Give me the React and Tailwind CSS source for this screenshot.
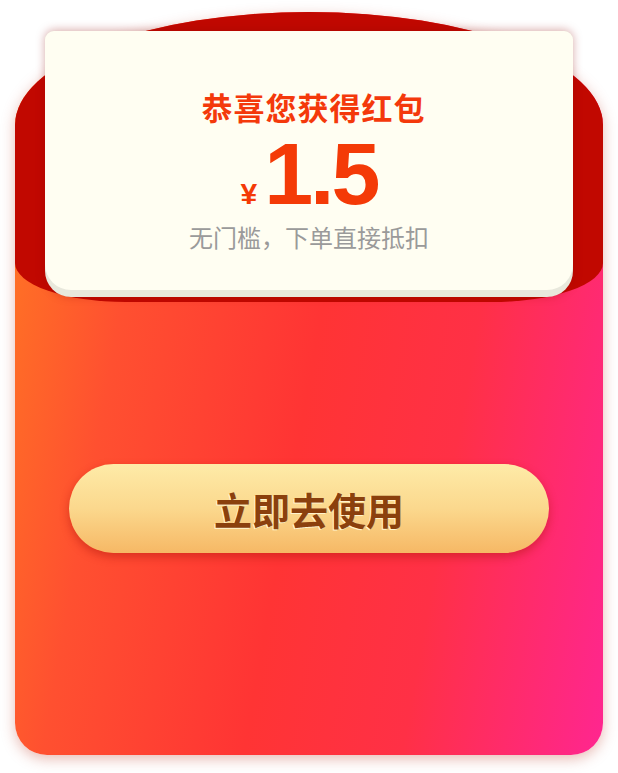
import React from 'react';

const cjk = { fontFamily: '"Noto Sans CJK SC", "Noto Sans", sans-serif' };

const RedPacket = () => {
  return (
    <div className="relative w-[588px] h-[743px] rounded-[294px_294px_32px_32px/113px_113px_32px_32px] bg-[linear-gradient(100deg,#ff7b22_0%,#ff5030_22%,#ff3434_50%,#ff3046_72%,#ff2690_100%)] shadow-[0_4px_14px_rgba(190,60,40,0.35)]">
      {/* top flap */}
      <div className="absolute left-0 top-0 w-full h-[290px] rounded-[294px_294px_111px_111px/113px_113px_39px_39px] bg-[#c10800]" />

      <div className="relative flex flex-col items-center">
        {/* coupon card */}
        <div className="mt-[19px] w-[528px] h-[266px] rounded-t-[9px] rounded-b-[26px] bg-[#e8e8dc] shadow-[0_-1px_10px_rgba(140,10,0,0.35)]">
          <div className="h-[259px] rounded-t-[9px] rounded-b-[26px] bg-[#fffef2] flex flex-col items-center pt-[60px]" style={cjk}>
            <div className="h-[32px] pl-[9px] text-[31px] leading-[32px] font-bold text-[#f4390b] tracking-[1px]">恭喜您获得红包</div>
            <div className="mt-[6px] h-[90px] flex items-baseline text-[#f43a07] font-bold" style={{ fontFamily: '"Liberation Sans", Arial, sans-serif' }}>
              <span className="text-[30px] leading-[90px] mr-[7px]">¥</span>
              <span className="text-[88px] leading-[90px] tracking-[-3px]">1.5</span>
            </div>
            <div className="mt-[6px] h-[24px] text-[24px] leading-[24px] text-[#9a9a9a]">无门槛，下单直接抵扣</div>
          </div>
        </div>

        {/* action button */}
        <button
          className="mt-[167px] w-[480px] h-[89px] rounded-full bg-[linear-gradient(180deg,#feeba8_0%,#fbd88d_50%,#f6b865_100%)] shadow-[0_4px_10px_rgba(170,20,10,0.45)] flex items-center justify-center"
          style={cjk}
        >
          <span className="text-[38px] leading-[40px] font-bold text-[#8b400d] [text-shadow:-1px_1px_0_#fff4cf]">立即去使用</span>
        </button>
      </div>
    </div>
  );
};

export default function App() {
  return (
    <div className="w-[618px] h-[773px] bg-white pl-[15px] pt-[12px]">
      <RedPacket />
    </div>
  );
}
